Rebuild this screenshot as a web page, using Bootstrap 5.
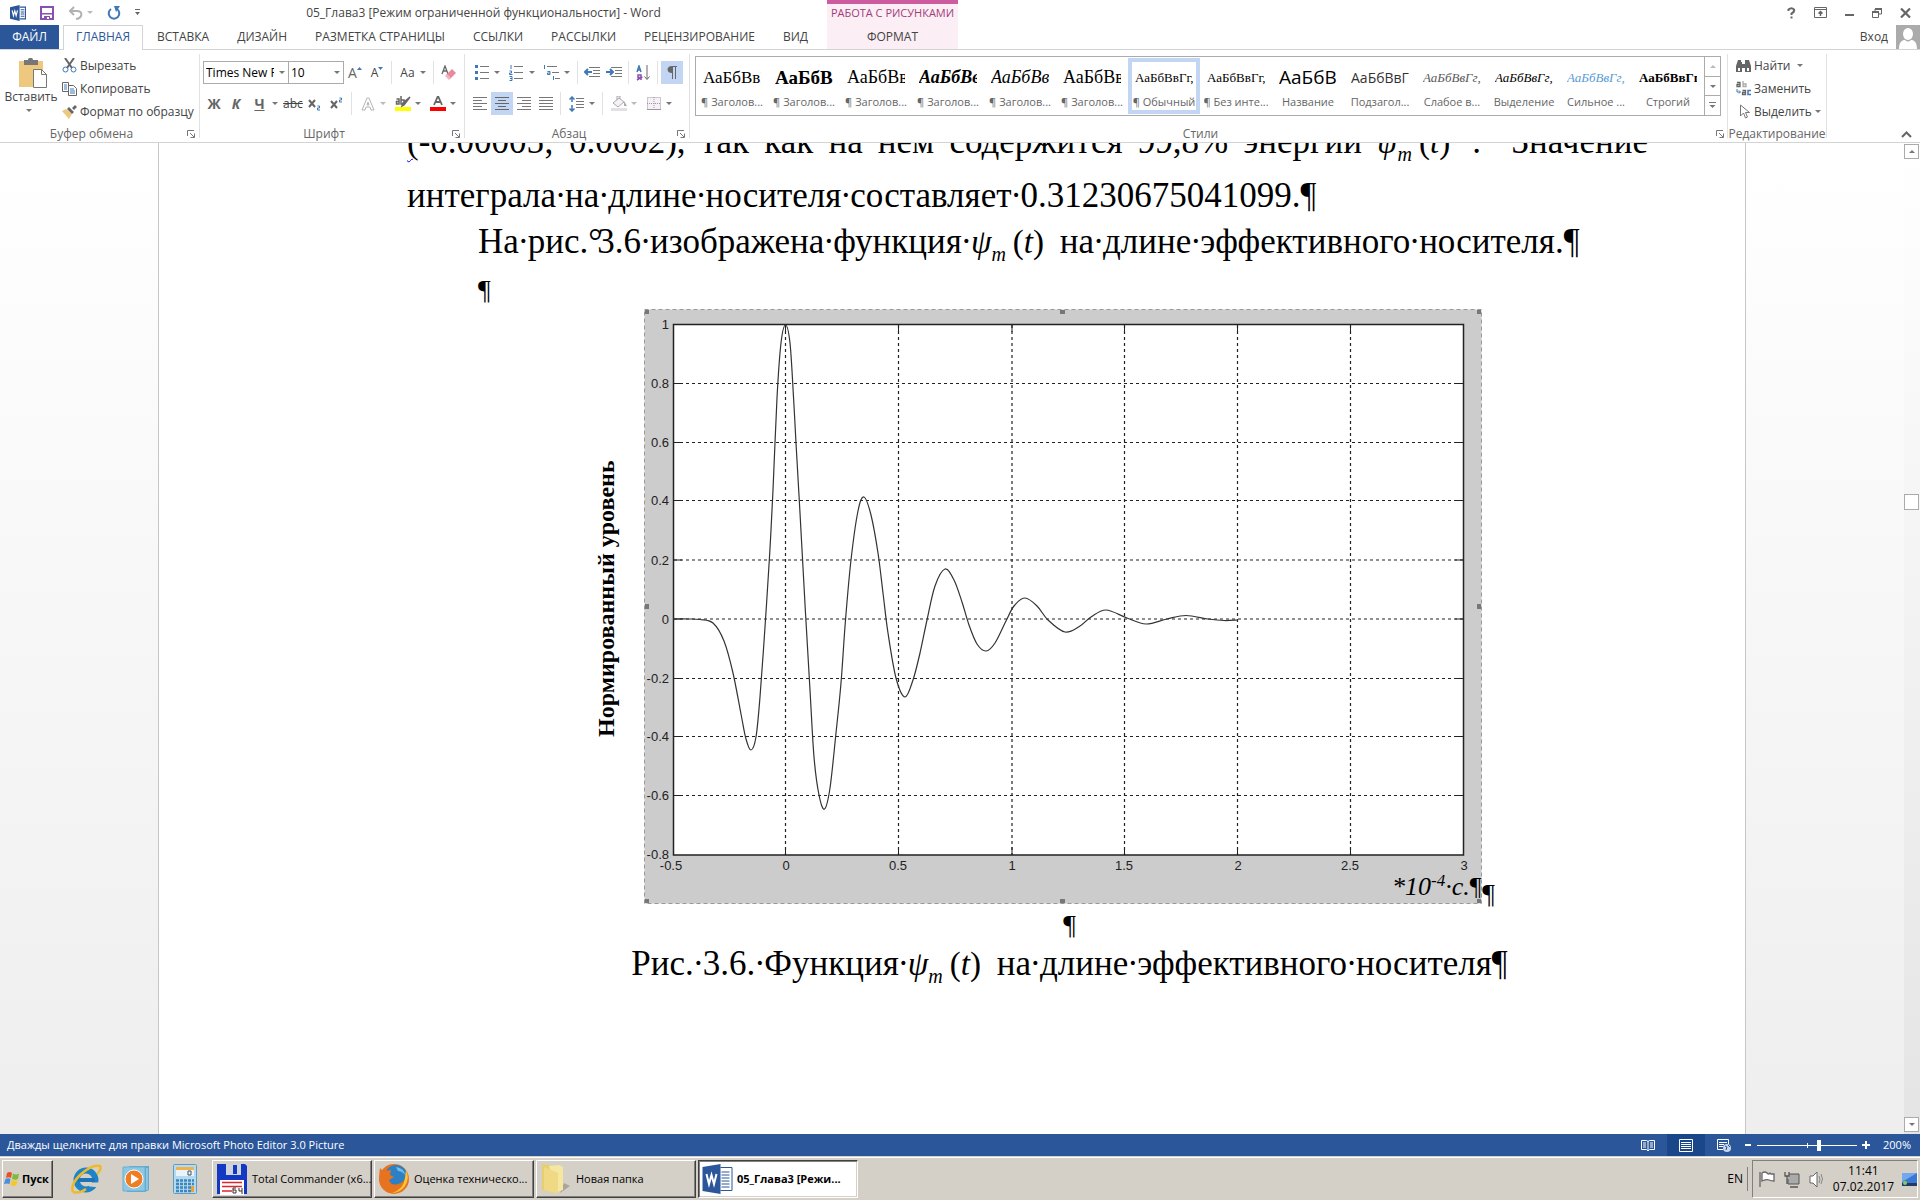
<!DOCTYPE html>
<html lang="ru">
<head>
<meta charset="utf-8">
<meta name="viewport" content="width=device-width, initial-scale=1">
<title>05_Глава3 - Word</title>
<link href="https://cdn.jsdelivr.net/npm/bootstrap@5.3.0/dist/css/bootstrap.min.css" rel="stylesheet">
<style>
:root{--ui:"Open Sans","Noto Sans",sans-serif;--serif:"Liberation Serif",serif;--blue:#2b579a;--sel:#c2d5f2;--line:#d4d4d4}
body{font:12px/16px var(--ui);color:#444;background:#fff}
button{font:inherit;color:inherit;border:0;background:none;padding:0;white-space:nowrap}
svg{display:block;flex:none}
a{color:inherit;text-decoration:none}
/* header */
.head-main{flex:0 0 827px}
.title-row,.sys-row{height:25px}
.qat{width:140px;padding-left:10px;gap:14px}
.qat button{display:flex;align-items:center}
.tabs{height:24px}
.tabs a{padding:0 14px;line-height:24px;height:25px;white-space:nowrap}
.tabs .tab-file{width:59px;padding:0;margin-right:4px;text-align:center;background:var(--blue);color:#fff;height:24px}
.tabs .tab-on{width:80px;padding:0;text-align:center;color:var(--blue);background:#fff;border:1px solid var(--line);border-bottom:0;position:relative;z-index:1;line-height:22px}
.ctx{width:131px;background:#fbeef5;border-top:4px solid #cc5b9f;text-align:center}
.ctx-name{height:21px;line-height:18px;color:#a43c7c;font-size:11px}
.ctx a{line-height:24px}
.sys-row{gap:18px;padding-right:9px}
/* ribbon */
.ribbon{height:94px;border-top:1px solid var(--line);border-bottom:1px solid var(--line)}
.grp{margin:4px 0 4px;border-right:1px solid #e1e1e1;display:flex;flex-direction:column;height:84px}
.g-clip{width:200px}.g-font{width:265px}.g-para{width:225px}.g-style{width:1038px}.g-edit{width:99px}
.g-foot{height:16px;line-height:16px;text-align:center;color:#666;position:relative;margin:auto 0 -4px;white-space:nowrap}
.g-foot button{position:absolute;right:4px;top:4px}
.g-style .g-foot button{right:3px}
.paste{width:58px}
.paste span{padding-left:4px}
.rows{padding:7px 3px 0}
.g-para .rows{padding-left:4px}
.trow{height:23px;display:flex;align-items:center}
.trow+.trow{margin-top:8px}
.tb{width:22px;height:23px;display:flex;align-items:center;justify-content:center}
.tb.on{background:var(--sel)}
.split{width:35px;height:23px;display:flex;align-items:center}
.split>span,.split>svg:first-child{margin:auto}
.split>i{margin-right:4px}
.arr{display:inline-block;border:3px solid transparent;border-top-color:#777;border-bottom:0}
.vsep{width:1px;height:23px;background:#e1e1e1;margin:0 3px}
.fsel{height:23px;border:1px solid #ababab;border-radius:0;font:12px/16px var(--ui);color:#000;padding:0 14px 0 2px;appearance:none;background:#fff;width:86px}
.fsel.size-sel{width:56px;margin-left:-1px}
.fwrap{position:relative;display:flex}
.fwrap i{position:absolute;right:4px;top:10px}
.glyph{font-size:14px;line-height:20px;color:#666}
.cmd{display:flex;align-items:center;height:23px;gap:3px}
.gallery{height:60px;width:1026px;margin:2px 0 0 5px;border:1px solid #ababab;display:flex}
.sty{width:72px;height:56px;margin-top:1px;border:4px solid transparent;overflow:hidden;display:flex;flex-direction:column;text-align:center}
.sty.on{border-color:var(--sel)}
.sty b{height:32px;width:58px;margin:0 3px;overflow:hidden;white-space:nowrap;text-align:left;font:400 18px/31px var(--serif);color:#000}
.sty em{font-style:normal;font-size:11px;line-height:16px;color:#666;white-space:nowrap;margin:0 -3px}
.sty b.s13{font-size:13px}
.sty b.s17{font-size:17px}
.sty b.s19{font-size:19px}
.sty b.sans{font-family:var(--ui)}
.sty b.sans.s14{font-size:14px;color:#333}
.sty b.weak{color:#595959}
.sty b.strong-blue{color:#5b9bd5}
.gscroll{width:16px;margin-left:auto;border-left:1px solid #ababab;display:flex;flex-direction:column}
.gscroll button{flex:1;display:flex;align-items:center;justify-content:center}
.gscroll button+button{border-top:1px solid #ababab}
/* document */
.canvas{flex:1 1 0;min-height:0;background:linear-gradient(#fff,#eee)}
.sheet{width:1588px;height:100%;overflow:hidden;background:#fff;border:1px solid #c6c6c6;border-width:0 1px;padding:0 97px 0 248px;font-family:var(--serif);font-size:35px;color:#000}
.sheet p{margin:0;white-space:nowrap}
.sheet i{display:inline-flex;justify-content:center;width:9px;font-style:normal;line-height:0}
.sheet .l-first{line-height:54px;margin-top:-28px;text-align:justify;text-align-last:justify;white-space:normal}
.l-two{line-height:54px}
.l-three{line-height:37px;padding-left:71px}
.sheet .l-four{line-height:38px;padding:11px 0 0 71px;font-size:28px}
.mid{margin-left:84px;text-align:center}
.fm{font-style:italic;font-size:33px;line-height:0;white-space:nowrap;margin-right:7px}
.fm sub{font-size:20px;bottom:auto;vertical-align:-8px;line-height:0;margin-right:7px}
.fm u{font-style:normal;text-decoration:none}
.deg{display:inline-block;width:9px;line-height:0}
.sq{text-decoration:underline wavy #00f 1px;text-underline-offset:5px}
.figrow{display:flex;justify-content:center;align-items:flex-end}
.figrow>span{font-size:28px;line-height:18px;width:13px}
.sheet .l-pil{line-height:43px;font-size:28px}
.l-cap{line-height:36px}
.vbar{width:16px;background:linear-gradient(#fff,#e4e4e4);padding:1px 0 2px}
.vbar button{height:15px;width:15px;border:1px solid #ababab;background:#fff;display:flex;align-items:center;justify-content:center}
.vtrack{flex:1;position:relative}
.vthumb{position:absolute;top:35%;left:0;width:15px;height:16px;border:1px solid #ababab;background:#fff}
.up{transform:rotate(180deg)}
/* status */
.status{height:22px;background:var(--blue);color:#fff;padding:0 9px 0 7px;font-size:11px}
.status button{width:38px;height:22px;display:flex;align-items:center;justify-content:center}
.status button.on{background:#19478a}
.status .zbtn{width:10px}
.zoomr{appearance:none;width:100px;height:13px;margin:0 4px;background:linear-gradient(#fff,#fff) center/100% 1px no-repeat,linear-gradient(#fff,#fff) center/1px 5px no-repeat}
.zoomr::-webkit-slider-thumb{appearance:none;width:4px;height:11px;background:#fff;border:0}
.zval{margin-left:12px}
/* taskbar */
.task{height:44px;background:#d4d0c8;border-top:1px solid #d4d0c8;box-shadow:inset 0 1px #fff;color:#000;padding:3px 2px 2px}
.tk{height:38px;border:1px solid;border-color:#fff #404040 #404040 #fff;box-shadow:inset -1px -1px #808080;display:flex;align-items:center;font-size:11px}
.tk.app{width:160px;margin-right:2px;padding-left:3px;gap:4px}
.tk.act{background:#fff;border-color:#404040 #fff #fff #404040;box-shadow:inset 1px 1px #808080,inset -1px -1px #d4d0c8;font-weight:700}
.start{width:51px;font-weight:700;gap:1px;padding-left:1px}
.quick{margin:0 8px 0 17px;gap:20px;width:134px}
.tray-sep{height:24px;width:1px;background:#808080}
.tray{border:1px solid;border-color:#808080 #fff #fff #808080;height:38px;width:166px;padding-left:5px}
</style>
</head>
<body>
<div class="d-flex flex-column vh-100 overflow-hidden">
<header class="d-flex">
  <div class="head-main">
    <div class="title-row d-flex align-items-center">
      <div class="qat d-flex align-items-center">
        <svg width="16" height="16" viewBox="0 0 30 30"><path d="M18 4h11v22H18" fill="#fff" stroke="#2b579a" stroke-width="2"/><path d="M20 9h7M20 13h7M20 17h7M20 21h7" stroke="#2b579a" stroke-width="2"/><path d="M0 4L18 0v30L0 26z" fill="#2b579a"/><path d="M4 10l2.500 10L9 11l2.500 9L14 10" fill="none" stroke="#fff" stroke-width="2.200"/></svg>
        <button type="button" aria-label="Сохранить"><svg width="14" height="14" viewBox="0 0 14 14"><path d="M1 1h12v12H1z" fill="none" stroke="#8b4fb0" stroke-width="2"/><path d="M2 7h10v1.500H2zM4 10h6v4H4z" fill="#8b4fb0"/><path d="M7 11h2v2H7z" fill="#fff"/></svg></button>
        <button type="button" aria-label="Отменить"><svg width="15" height="14" viewBox="0 0 15 14"><path d="M2 5h7c6 0 6 7-1 8M6 1L2 5l4 4" fill="none" stroke="#b1b1b1" stroke-width="2"/></svg><i class="arr ms-1 opacity-50"></i></button>
        <button type="button" aria-label="Повторить"><svg width="14" height="14" viewBox="0 0 14 14"><path d="M10 3a5.300 5.300 0 1 1-6 0" fill="none" stroke="#3f78b5" stroke-width="2"/><path d="M7 0h6L9 6z" fill="#3f78b5"/></svg></button>
        <button type="button" aria-label="Настройка"><svg width="5" height="7" viewBox="0 0 5 7"><path d="M0 0h5v1H0zM0 3h5L2.500 6z" fill="#666"/></svg></button>
      </div>
      <div class="flex-grow-1 text-center">05_Глава3 [Режим ограниченной функциональности] - Word</div>
    </div>
    <nav class="tabs d-flex">
      <a href="#" class="tab-file">ФАЙЛ</a><a href="#" class="tab-on">ГЛАВНАЯ</a><a href="#">ВСТАВКА</a><a href="#">ДИЗАЙН</a><a href="#">РАЗМЕТКА СТРАНИЦЫ</a><a href="#">ССЫЛКИ</a><a href="#">РАССЫЛКИ</a><a href="#">РЕЦЕНЗИРОВАНИЕ</a><a href="#">ВИД</a>
    </nav>
  </div>
  <div class="ctx"><div class="ctx-name">РАБОТА С РИСУНКАМИ</div><a href="#">ФОРМАТ</a></div>
  <div class="flex-grow-1">
    <div class="sys-row d-flex justify-content-end align-items-center">
      <button type="button" aria-label="Справка"><svg width="9" height="12" viewBox="0 0 9 12"><path d="M1.500 4V2.500Q4.500 0 7 2.500 8 4.500 4.500 6.500V8M4.500 9.500v2" fill="none" stroke="#666" stroke-width="2"/></svg></button>
      <button type="button" aria-label="Лента"><svg width="13" height="11" viewBox="0 0 13 11"><path d="M.5.5h12v10H.5zM.5 2.500h12" fill="none" stroke="#666"/><path d="M6.500 9V5M4.500 6.500l2-2 2 2" fill="none" stroke="#666" stroke-width="1.500"/></svg></button>
      <button type="button" aria-label="Свернуть"><svg width="9" height="11"><path d="M0 7h9v2H0z" fill="#666"/></svg></button>
      <button type="button" aria-label="Восстановить"><svg width="10" height="10" viewBox="0 0 10 10"><path d="M.5 4h6v5.500h-6zM3 3V1h6.500v5H7" fill="none" stroke="#666"/><path d="M0 3h7v2H0zM3 0h7v2H3z" fill="#666"/></svg></button>
      <button type="button" aria-label="Закрыть"><svg width="11" height="10" viewBox="0 0 11 10"><path d="M1 .5l9 9M10 .5l-9 9" stroke="#666" stroke-width="2.200"/></svg></button>
    </div>
    <div class="d-flex justify-content-end align-items-center"><a href="#" class="me-2">Вход</a><svg width="24" height="24" viewBox="0 0 24 24"><path fill="#ababab" d="M0 0h24v24H0z"/><ellipse cx="12" cy="9" rx="5" ry="6" fill="#fff"/><path d="M3 24c0-7 3-9 6-9 2 2 4 2 6 0 3 0 6 2 6 9z" fill="#fff"/></svg></div>
  </div>
</header>

<section class="ribbon d-flex">
  <div class="grp g-clip">
    <div class="d-flex">
      <button type="button" class="paste d-flex flex-column align-items-center flex-shrink-0">
        <svg class="mt-1 ms-2" width="30" height="31" viewBox="0 0 30 31"><path d="M1 3h24v26H1z" fill="#edc87e"/><path d="M6 2h4c0-3 5-3 5 0h5v5H6z" fill="#777"/><path d="M15.500 11.500h8l5 5v13h-13z" fill="#fff" stroke="#777"/><path d="M23.500 11.500v5h5" fill="none" stroke="#777"/></svg>
        <span>Вставить</span><i class="arr mt-1"></i>
      </button>
      <div class="ps-1">
        <button type="button" class="cmd"><svg width="15" height="15" viewBox="0 0 15 15"><path d="M3 0l7 10M12 0L5 10" stroke="#666" stroke-width="2"/><circle cx="3.500" cy="11.500" r="2.500" fill="none" stroke="#3f78b5"/><circle cx="11.500" cy="11.500" r="2.500" fill="none" stroke="#3f78b5"/></svg>Вырезать</button>
        <button type="button" class="cmd"><svg width="15" height="14" viewBox="0 0 15 14"><path d="M.5.5h6v9h-6zM6.500 3.500h5l3 3v7h-8z" fill="#fff" stroke="#666"/><path d="M2 3h3M2 5h3M2 7h3M8 7h4M8 9h5M8 11h5" stroke="#3f78b5"/></svg>Копировать</button>
        <button type="button" class="cmd"><svg width="15" height="14" viewBox="0 0 15 14"><path d="M0 6l4-2 6 5-3 5z" fill="#edc87e"/><path d="M5 4l2-2 5 5-2 2zM10 3l3-3 2 2-3 3z" fill="#666"/></svg>Формат по образцу</button>
      </div>
    </div>
    <div class="g-foot pe-3">Буфер обмена<button type="button" aria-label="Буфер обмена: параметры"><svg width="8" height="8" viewBox="0 0 8 8"><path d="M.5 6V.5H7M3 3l4 4M7.500 3.500v4h-4" fill="none" stroke="#777"/></svg></button></div>
  </div>

  <div class="grp g-font">
    <div class="rows">
      <div class="trow">
        <div class="fwrap"><select class="fsel" aria-label="Шрифт"><option>Times New Roman</option></select><i class="arr"></i></div>
        <div class="fwrap"><select class="fsel size-sel" aria-label="Размер"><option>10</option></select><i class="arr"></i></div>
        <button type="button" class="tb glyph" aria-label="Увеличить">А<svg width="5" height="12"><path d="M0 3h5L2.500 0z" fill="#3f78b5"/></svg></button>
        <button type="button" class="tb" aria-label="Уменьшить"><span>А</span><svg width="5" height="12"><path d="M0 0h5L2.500 3z" fill="#3f78b5"/></svg></button>
        <span class="vsep"></span>
        <button type="button" class="split"><span>Aa</span><i class="arr"></i></button>
        <span class="vsep"></span>
        <button type="button" class="tb" aria-label="Очистить"><svg width="15" height="15" viewBox="0 0 15 15"><path d="M1 9l3-8 3 8M2 6h4" stroke="#666" fill="none" stroke-width="1.300"/><path d="M5 10l6-6 4 4-6 6z" fill="#e88a9a"/><path d="M4 11l2-2 4 4-2 2z" fill="#f3b6c0"/></svg></button>
      </div>
      <div class="trow">
        <button type="button" class="tb fw-bold glyph">Ж</button>
        <button type="button" class="tb fw-bold fst-italic glyph">К</button>
        <button type="button" class="split fw-bold"><span class="text-decoration-underline glyph">Ч</span><i class="arr"></i></button>
        <button type="button" class="tb text-decoration-line-through">abc</button>
        <button type="button" class="tb" aria-label="Подстрочный"><svg width="14" height="14" viewBox="0 0 14 14"><path d="M1 3l6 7M7 3l-6 7" stroke="#666" stroke-width="2"/><path d="M9.500 9h2v2h-2v2h2.500" stroke="#3f78b5" fill="none"/></svg></button>
        <button type="button" class="tb" aria-label="Надстрочный"><svg width="14" height="14" viewBox="0 0 14 14"><path d="M1 4l6 7M7 4l-6 7" stroke="#666" stroke-width="2"/><path d="M9.500 1h2v2h-2v2h2.500" stroke="#3f78b5" fill="none"/></svg></button>
        <span class="vsep"></span>
        <button type="button" class="split" aria-label="Эффекты"><svg width="14" height="14" viewBox="0 0 14 14"><path d="M1 13L6 1h2l5 12h-3l-1-3H5l-1 3zM6 8h2L7 5z" fill="#fff" stroke="#b5b5b5"/></svg><i class="arr opacity-50"></i></button>
        <button type="button" class="split" aria-label="Выделение цветом"><svg width="16" height="15" viewBox="0 0 16 15"><path d="M0 11h16v4H0z" fill="#ff0"/><path d="M1.500 3h2.500v5H1.500V5.500H4M6 0v8h3V4H6M15 1L9 9l-2 1 1-3z" fill="none" stroke="#666" stroke-width="1.500"/></svg><i class="arr"></i></button>
        <button type="button" class="split" aria-label="Цвет текста"><svg width="16" height="15" viewBox="0 0 16 15"><path d="M0 11h16v4H0z" fill="red"/><path d="M4 9l4-9 4 9M5.500 6h5" fill="none" stroke="#666" stroke-width="1.800"/></svg><i class="arr"></i></button>
      </div>
    </div>
    <div class="g-foot pe-3">Шрифт<button type="button" aria-label="Шрифт: параметры"><svg width="8" height="8" viewBox="0 0 8 8"><path d="M.5 6V.5H7M3 3l4 4M7.500 3.500v4h-4" fill="none" stroke="#777"/></svg></button></div>
  </div>

  <div class="grp g-para">
    <div class="rows">
      <div class="trow">
        <button type="button" class="split" aria-label="Маркеры"><svg width="14" height="16" viewBox="0 0 14 16"><path d="M0 0h3v3H0zM0 6h3v3H0zM0 12h3v3H0z" fill="#3f78b5"/><path d="M5 1.500h9M5 7.500h9M5 13.500h9" stroke="#777"/></svg><i class="arr"></i></button>
        <button type="button" class="split" aria-label="Нумерация"><svg width="15" height="16" viewBox="0 0 15 16"><path d="M2 0v4M.5 6h2v2h-2v1.500h3M.5 11.500h2.500v4H.5M1 13.500h2" stroke="#3f78b5" fill="none"/><path d="M5 1.500h9M5 7.500h9M5 13.500h9" stroke="#777"/></svg><i class="arr"></i></button>
        <button type="button" class="split" aria-label="Многоуровневый список"><svg width="17" height="16" viewBox="0 0 17 16"><path d="M1.500 0v4M4.500 6.500H7v3H4.500V8H7M10.500 11v4" stroke="#3f78b5" fill="none"/><path d="M4 1.500h10M9 7.500h7M12 13.500h5" stroke="#777"/></svg><i class="arr"></i></button>
        <span class="vsep"></span>
        <button type="button" class="tb" aria-label="Уменьшить отступ"><svg width="16" height="12" viewBox="0 0 16 12"><path d="M5 .5h11M9 3.500h7M9 6.500h7M5 9.500h11" stroke="#777"/><path d="M8 5H2M4 2L1 5l3 3" fill="none" stroke="#3f78b5" stroke-width="2"/></svg></button>
        <button type="button" class="tb" aria-label="Увеличить отступ"><svg width="16" height="12" viewBox="0 0 16 12"><path d="M5 .5h11M9 3.500h7M9 6.500h7M5 9.500h11" stroke="#777"/><path d="M0 5h6M4 2l3 3-3 3" fill="none" stroke="#3f78b5" stroke-width="2"/></svg></button>
        <span class="vsep"></span>
        <button type="button" class="tb" aria-label="Сортировка"><svg width="14" height="16" viewBox="0 0 14 16"><path d="M1 7l2-6 2 6M2 5h3" stroke="#3f78b5" stroke-width="1.500" fill="none"/><path d="M5 15V10H2v2.500h3L1 15" stroke="#8b4fb0" stroke-width="1.500" fill="none"/><path d="M11 0v14M8.500 11.500l2.500 3 2.500-3" stroke="#666" fill="none"/></svg></button>
        <span class="vsep"></span>
        <button type="button" class="tb on" aria-label="Все знаки"><svg width="10" height="13" viewBox="0 0 10 13"><path d="M5 0H10V1H9v12H8V1H6v12H5V7C-1 7-1 0 5 0z" fill="#666"/></svg></button>
      </div>
      <div class="trow">
        <button type="button" class="tb" aria-label="По левому краю"><svg width="14" height="13"><path d="M0 .5h14M0 3.500h9M0 6.500h14M0 9.500h9M0 12.500h14" stroke="#777"/></svg></button>
        <button type="button" class="tb on" aria-label="По центру"><svg width="14" height="13"><path d="M0 .5h14M3 3.500h8M0 6.500h14M3 9.500h8M0 12.500h14" stroke="#666"/></svg></button>
        <button type="button" class="tb" aria-label="По правому краю"><svg width="14" height="13"><path d="M0 .5h14M5 3.500h9M0 6.500h14M5 9.500h9M0 12.500h14" stroke="#777"/></svg></button>
        <button type="button" class="tb" aria-label="По ширине"><svg width="14" height="13"><path d="M0 .5h14M0 3.500h14M0 6.500h14M0 9.500h14M0 12.500h14" stroke="#777"/></svg></button>
        <span class="vsep"></span>
        <button type="button" class="split" aria-label="Интервал"><svg width="15" height="16" viewBox="0 0 15 16"><path d="M3 1v5M.5 3.500L3 1l2.500 2.500M3 9v6M.5 12.500L3 15l2.500-2.500" stroke="#3f78b5" stroke-width="1.500" fill="none"/><path d="M7 2.500h8M7 5.500h8M7 8.500h8M7 11.500h8" stroke="#777"/></svg><i class="arr"></i></button>
        <span class="vsep"></span>
        <button type="button" class="split" aria-label="Заливка"><svg width="16" height="15" viewBox="0 0 16 15"><path d="M0 12h16v3H0z" fill="#e4dfe4"/><path d="M2 7l6-5 5 4-6 5zM6 4V0h3v3" fill="#f6f1f6" stroke="#aaa"/><path d="M13 5l3 5h-3z" fill="#aaa"/></svg><i class="arr opacity-50"></i></button>
        <button type="button" class="split" aria-label="Границы"><svg width="14" height="13"><path d="M.5.5h13v12H.5zM7 0v13M0 6.500h14" fill="#f8f0f8" stroke="#999" stroke-dasharray="1 1"/><path d="M0 12.500h14" stroke="#999"/></svg><i class="arr"></i></button>
      </div>
    </div>
    <div class="g-foot pe-3">Абзац<button type="button" aria-label="Абзац: параметры"><svg width="8" height="8" viewBox="0 0 8 8"><path d="M.5 6V.5H7M3 3l4 4M7.500 3.500v4h-4" fill="none" stroke="#777"/></svg></button></div>
  </div>

  <div class="grp g-style">
    <div class="gallery">
      <button type="button" class="sty"><b class="s17">АаБбВвГ</b><em>¶ Заголов...</em></button>
      <button type="button" class="sty"><b class="s19 fw-bold">АаБбВ</b><em>¶ Заголов...</em></button>
      <button type="button" class="sty"><b>АаБбВв</b><em>¶ Заголов...</em></button>
      <button type="button" class="sty"><b class="fw-bold fst-italic">АаБбВв</b><em>¶ Заголов...</em></button>
      <button type="button" class="sty"><b class="fst-italic">АаБбВв</b><em>¶ Заголов...</em></button>
      <button type="button" class="sty"><b>АаБбВв</b><em>¶ Заголов...</em></button>
      <button type="button" class="sty on"><b class="s13">АаБбВвГг,</b><em>¶ Обычный</em></button>
      <button type="button" class="sty"><b class="s13">АаБбВвГг,</b><em>¶ Без инте...</em></button>
      <button type="button" class="sty"><b class="sans s19">АаБбВ</b><em>Название</em></button>
      <button type="button" class="sty"><b class="sans s14">АаБбВвГ</b><em>Подзагол...</em></button>
      <button type="button" class="sty"><b class="s13 fst-italic weak">АаБбВвГг,</b><em>Слабое в...</em></button>
      <button type="button" class="sty"><b class="s13 fst-italic">АаБбВвГг,</b><em>Выделение</em></button>
      <button type="button" class="sty"><b class="s13 fst-italic strong-blue">АаБбВвГг,</b><em>Сильное ...</em></button>
      <button type="button" class="sty"><b class="s13 fw-bold">АаБбВвГг</b><em>Строгий</em></button>
      <div class="gscroll"><button type="button" aria-label="Вверх"><i class="arr up opacity-50"></i></button><button type="button" aria-label="Вниз"><i class="arr"></i></button><button type="button" aria-label="Ещё"><svg width="7" height="7"><path d="M0 0h7v1H0zM.5 3h6l-3 3z" fill="#777"/></svg></button></div>
    </div>
    <div class="g-foot pe-3">Стили<button type="button" aria-label="Стили: параметры"><svg width="8" height="8" viewBox="0 0 8 8"><path d="M.5 6V.5H7M3 3l4 4M7.500 3.500v4h-4" fill="none" stroke="#777"/></svg></button></div>
  </div>

  <div class="grp g-edit">
    <div class="ps-2">
      <button type="button" class="cmd"><svg width="15" height="14" viewBox="0 0 15 14"><path d="M2 1h3v2h1v10H0V7zM9 3V1h4l2 6v6H9zM6 5h3v4H6z" fill="#666"/><path d="M2 9h2v3H2zM11 9h2v3h-2z" fill="#fff"/></svg>Найти<i class="arr ms-1"></i></button>
      <button type="button" class="cmd"><svg width="15" height="15" viewBox="0 0 15 15"><path d="M1 1.500h3v4H1v-2h3" fill="none" stroke="#666" stroke-width="1.300"/><path d="M7 0v5.500h3V3H7" fill="none" stroke="#aaa" stroke-width="1.300"/><path d="M1 8v3h3M3 9.500L4.500 11 3 12.500" fill="none" stroke="#3f78b5"/><path d="M6.500 9.500h3v4h-3v-2h3" fill="none" stroke="#666" stroke-width="1.300"/><path d="M15 9.500h-3v4h3" fill="none" stroke="#3f78b5" stroke-width="1.500"/></svg>Заменить</button>
      <button type="button" class="cmd"><svg width="15" height="15" viewBox="0 0 15 15"><path d="M4.500 1v11l3-3 2 5 2-1-2-4.500h4z" fill="#fff" stroke="#777"/></svg>Выделить<i class="arr"></i></button>
    </div>
    <div class="g-foot">Редактирование</div>
  </div>
  <button type="button" class="ms-auto me-2 mt-auto mb-1" aria-label="Свернуть ленту"><svg width="11" height="7"><path d="M1 6l4.500-4.500L10 6" fill="none" stroke="#666" stroke-width="2"/></svg></button>
</section>

<main class="canvas d-flex">
  <div class="flex-grow-1 d-flex justify-content-center">
    <article class="sheet">
      <p class="l-first"><span class="sq">(</span>-0.00005; 0.0002), так как на нем содержится 99,8% энергии <span class="fm">ψ<sub>m</sub><u>(</u>t<u>)</u></span> . &nbsp;Значение</p>
      <p class="l-two">интеграла<i>·</i>на<i>·</i>длине<i>·</i>носителя<i>·</i>составляет<i>·</i>0.31230675041099.¶</p>
      <p class="l-three">На<i>·</i>рис.<span class="deg">°</span>3.6<i>·</i>изображена<i>·</i>функция<i>·</i><span class="fm">ψ<sub>m</sub><u>(</u>t<u>)</u></span> на<i>·</i>длине<i>·</i>эффективного<i>·</i>носителя.¶</p>
      <p class="l-four">¶</p>
      <div class="mid">
        <div class="figrow">
          <svg width="838" height="594" viewBox="644 309 838 594" overflow="visible" font-family="Liberation Sans" font-size="13" fill="#222">
            <rect x="644.500" y="309.500" width="837" height="594" fill="#ccc" stroke="#999" stroke-dasharray="4 3"/>
            <path d="M673.500 324.500H1463.500V855H673.500z" fill="#fff" stroke="#222" stroke-width="1.500"/>
            <path stroke="#222" stroke-dasharray="3 3" stroke-width="1.200" fill="none" d="M785.500 325V855M898.500 325V855M1012 325V855M1124.500 325V855M1237.500 325V855M1350.500 325V855M674 383.500H1463M674 442.500H1463M674 500.500H1463M674 560H1463M674 619H1463M674 678.500H1463M674 736.500H1463M674 795.500H1463"/>
            <path stroke="#222" fill="none" d="M785.500 325v7M898.500 325v7M1012 325v7M1124.500 325v7M1237.500 325v7M1350.500 325v7M785.500 847v8M898.500 847v8M1012 847v8M1124.500 847v8M1237.500 847v8M1350.500 847v8M674 383.500h8M674 442.500h8M674 500.500h8M674 560h8M674 619h8M674 678.500h8M674 736.500h8M674 795.500h8M1455 383.500h8M1455 442.500h8M1455 500.500h8M1455 560h8M1455 619h8M1455 678.500h8M1455 736.500h8M1455 795.500h8"/>
            <path id="wave" fill="none" stroke="#333" stroke-width="1.200"/>
            <g text-anchor="end"><text x="669" y="329">1</text><text x="669" y="388">0.8</text><text x="669" y="447">0.6</text><text x="669" y="505">0.4</text><text x="669" y="565">0.2</text><text x="669" y="624">0</text><text x="669" y="683">-0.2</text><text x="669" y="741">-0.4</text><text x="669" y="800">-0.6</text><text x="669" y="859">-0.8</text></g>
            <g text-anchor="middle"><text x="671" y="870">-0.5</text><text x="786" y="870">0</text><text x="898" y="870">0.5</text><text x="1012" y="870">1</text><text x="1124" y="870">1.5</text><text x="1238" y="870">2</text><text x="1350" y="870">2.5</text><text x="1464" y="870">3</text></g>
            <path fill="#777" d="M645 310h4v4h-4zM1060 310h5v4h-5zM1477 310h4v4h-4zM645 604h4v5h-4zM1477 604h4v5h-4zM645 899h4v4h-4zM1060 899h5v4h-5zM1477 899h4v4h-4z"/>
            <g font-family="Liberation Serif" fill="#000">
              <text x="1392" y="895" font-size="26" font-style="italic">*10<tspan font-size="17" dy="-9">-4</tspan><tspan dy="9">·с.</tspan><tspan font-style="normal">¶</tspan></text>
              <text transform="translate(614 737) rotate(-90)" font-size="24" font-weight="700">Нормированный уровень</text>
            </g>
          </svg><span>¶</span>
        </div>
        <p class="l-pil">¶</p>
        <p class="l-cap">Рис.<i>·</i>3.6.<i>·</i>Функция<i>·</i><span class="fm">ψ<sub>m</sub><u>(</u>t<u>)</u></span> на<i>·</i>длине<i>·</i>эффективного<i>·</i>носителя¶</p>
      </div>
    </article>
  </div>
  <div class="vbar d-flex flex-column"><button type="button" aria-label="Вверх"><i class="arr up"></i></button><div class="vtrack"><div class="vthumb"></div></div><button type="button" aria-label="Вниз"><i class="arr"></i></button></div>
</main>

<footer class="status d-flex align-items-center">
  <span class="me-auto">Дважды щелкните для правки Microsoft Photo Editor 3.0 Picture</span>
  <button type="button" aria-label="Чтение"><svg width="14" height="13" viewBox="0 0 14 13"><path d="M.5 1.500h5l1.500 1 1.500-1h5v9h-5l-1.500 1.500-1.500-1.500h-5zM7 2v10M2 4h3M2 6h3M2 8h3M9 4h3M9 6h3M9 8h3" fill="none" stroke="#fff"/></svg></button>
  <button type="button" class="on" aria-label="Разметка"><svg width="14" height="13" viewBox="0 0 14 13"><path d="M.5.5h13v12H.5zM2 3.500h10M2 5.500h10M2 7.500h10M2 9.500h10" fill="none" stroke="#fff"/></svg></button>
  <button type="button" aria-label="Веб"><svg width="14" height="13" viewBox="0 0 14 13"><path d="M6 10.500H.5V.5h11V5M2 3.500h8M2 5.500h5M2 7.500h4" fill="none" stroke="#fff"/><circle cx="10" cy="9" r="4" fill="#c8d6ea"/><path d="M8 7l2 1-1 3M11 6l2 2" stroke="#2b579a" fill="none"/></svg></button>
  <button type="button" class="zbtn" aria-label="Мельче"><svg width="6" height="2"><path d="M0 0h6v2H0z" fill="#fff"/></svg></button>
  <input type="range" class="zoomr" min="0" max="100" value="62" aria-label="Масштаб">
  <button type="button" class="zbtn" aria-label="Крупнее"><svg width="8" height="8"><path d="M0 3h8v2H0zM3 0h2v8H3z" fill="#fff"/></svg></button>
  <span class="zval">200%</span>
</footer>

<div class="task d-flex">
  <button type="button" class="tk start"><svg width="17" height="16" viewBox="0 0 17 16"><path d="M3 2q3-2 5 0L7 7Q5 5.500 2 7z" fill="#e8502a"/><path d="M9 2.500q3 2 6 0L14 8q-3 1.500-6 0z" fill="#7dbb3c"/><path d="M1.500 8q3-1.500 5 0L5.500 13Q3 12 0 13z" fill="#4a8edb"/><path d="M7.500 9q3 1.500 6 0l-1 5q-3 2-6 0z" fill="#f7c52c"/></svg>Пуск</button>
  <div class="quick d-flex align-items-center">
    <svg width="32" height="32" viewBox="0 0 32 32"><circle cx="16" cy="17" r="9.500" fill="none" stroke="#1d84c8" stroke-width="6"/><path d="M8 17h17" stroke="#1b74b8" stroke-width="4"/><path d="M19 19.500h12v5l-12-1z" fill="#d4d0c8"/><path d="M3 29Q0 22 10 12 22 1 30 3q2 3-3 8M3 29q6 2 13-3" fill="none" stroke="#f0b927" stroke-width="2.500"/></svg>
    <svg width="31" height="30" viewBox="0 0 31 30"><path d="M7 2h20v24l-4 2H5z" fill="#5ea9cf"/><path d="M1 3h22v24H1z" fill="#8cc8e6" stroke="#6aaed0"/><path d="M25 4v22" stroke="#b8e0f2"/><circle cx="12" cy="15" r="9" fill="#f07d22" stroke="#fff"/><path d="M9 10l8 5-8 5z" fill="#fff"/></svg>
    <svg width="24" height="30" viewBox="0 0 24 30"><rect x=".5" y=".5" width="23" height="29" rx="1" fill="#b5daf0" stroke="#5c9dc5"/><path d="M3 3h18v3H3z" fill="#f3b04b"/><path d="M3 6h18v6H3z" fill="#e9f4fa"/><path d="M15 7h3v4h-3z" fill="none" stroke="#456"/><path d="M3 16.500h18M3 20h18M3 23.500h18M3 27h15" stroke="#3c86bb" stroke-width="2.500" stroke-dasharray="3 1"/><path d="M18 22h3v6h-3z" fill="#f0a030"/></svg>
  </div>
  <button type="button" class="tk app"><svg width="32" height="32" viewBox="0 0 32 32"><path d="M1 1h28l2 2v28H1z" fill="#1238c4"/><path d="M10 1h15v11H10z" fill="#cfd3dc"/><path d="M17 2h4v9h-4z" fill="#1238c4"/><path d="M4 17h24v15H4z" fill="#fff"/><path d="M6 19.500h20M6 23.500h20M6 28h10" stroke="#e0262c" stroke-width="1.500"/><path d="M20 25h-3v5h3v-3h-3M23 25v3h3M26 25v6" fill="none" stroke="#333"/></svg>Total Commander (x6...</button>
  <button type="button" class="tk app"><svg width="32" height="32" viewBox="0 0 32 32"><circle cx="16" cy="16" r="15" fill="#e8731f"/><circle cx="18" cy="13" r="11" fill="#2f7fc4"/><path d="M18 4q8 1 9 8-3-4-7-4z" fill="#6fc0e8"/><path d="M2 5q2 3 5 3l6-1-1 5 4 2-5 3q2 6 9 4 8-2 9-11 2 8-3 15-8 7-17 4Q-1 23 2 5z" fill="#e8731f"/><path d="M28 7q4 8-1 16-5 7-13 7 12-4 13-15z" fill="#f9c834"/></svg>Оценка техническо...</button>
  <button type="button" class="tk app"><svg width="32" height="32" viewBox="0 0 32 32"><path d="M20 30l10-7-6-3z" fill="#aaa59a"/><path d="M2 1l8 1v27l-8-2z" fill="#e8cf6e"/><path d="M9 3l10-1 4 2v23l-6 2z" fill="#f5e6a0"/><path d="M4 4l14 6v21L4 27z" fill="#f0d984"/></svg>Новая папка</button>
  <button type="button" class="tk app act"><svg width="31" height="30" viewBox="0 0 30 30"><path d="M18 3.500h11.500v23H18" fill="#fff" stroke="#2b579a"/><path d="M19 8h8M19 11h8M19 14h8M19 17h8M19 20h8M19 23h8" stroke="#2b579a"/><path d="M0 3L18 0v30L0 27z" fill="#2b579a"/><path d="M4 10l2.500 10L9 11l2.500 9L14 10" fill="none" stroke="#fff" stroke-width="2"/></svg>05_Глава3 [Режи...</button>
  <div class="ms-auto d-flex align-items-center">
    <span class="pe-1">EN</span><span class="tray-sep me-1"></span>
    <div class="tray d-flex align-items-center">
      <svg width="18" height="17" viewBox="0 0 18 17"><path d="M2 1v15M4 2q3-2 5 0t3 0l1 1h3v7q-3 0-5-1t-7 1z" fill="#fff" stroke="#666" stroke-width="1.300"/></svg>
      <svg class="ms-2" width="16" height="17" viewBox="0 0 16 17"><path d="M5 3h10v10H4V8" fill="#aaa" stroke="#555"/><path d="M1 1v4h4V1M3 5v8M6 16h8" fill="none" stroke="#555" stroke-width="1.300"/></svg>
      <svg class="ms-2" width="16" height="17" viewBox="0 0 16 17"><path d="M2 5h3l4-4v15l-4-4H2z" fill="#fff" stroke="#666"/><path d="M11 5q2 3 0 7M13 3q3 5 0 10" fill="none" stroke="#888"/></svg>
      <div class="text-center ms-auto">11:41<br>07.02.2017</div>
      <svg class="ms-2" width="15" height="13" viewBox="0 0 15 13"><path d="M0 0h15v11H0z" fill="#3b78d4"/><path d="M0 0h15L0 9z" fill="#74a8ee"/><path d="M0 10h15v3H0z" fill="#223a66"/><circle cx="3" cy="10" r="2" fill="#8c5"/></svg>
    </div>
  </div>
</div>
</div>
<script>
// Sampled waveform, joined by a smooth Catmull-Rom curve
const pts=[[673,619],[688,619],[700,619.5],[713,623],[724,641],[733,673],[741,714],[746,739],[751,750],[756,737],[760,697],[765,627],[769.5,557],[773,490],[777,398],[781,343],[785.5,325],[790,343],[793.5,397],[796,443],[800,513],[805.5,613],[810,690],[814,757],[819,795],[824.5,809],[830,788],[836,733],[841,683],[845.5,620],[851,560],[858,511],[864,497],[871,515],[878,553],[883,593],[888,633],[896,678],[905,697],[913,680],[920,653],[927,620],[935,586],[945,569],[954,580],[962,602],[969,625],[977,644],[986,651],[995,643],[1006,621],[1014,606],[1025,598],[1037,606],[1048,620],[1065,632],[1080,626],[1091,617],[1106,610],[1127,618],[1146,624],[1167,619],[1186,615.5],[1208,619],[1224,620.5],[1238,620]];
let d="M"+pts[0];
for(let i=0;i<pts.length-1;i++){
  const a=pts[i-1]||pts[i],b=pts[i],c=pts[i+1],e=pts[i+2]||c;
  d+="C"+[b[0]+(c[0]-a[0])/6,b[1]+(c[1]-a[1])/6,c[0]-(e[0]-b[0])/6,c[1]-(e[1]-b[1])/6,c[0],c[1]];
}
document.getElementById("wave").setAttribute("d",d);
</script>
<script src="https://cdn.jsdelivr.net/npm/bootstrap@5.3.0/dist/js/bootstrap.bundle.min.js"></script>
</body>
</html>
